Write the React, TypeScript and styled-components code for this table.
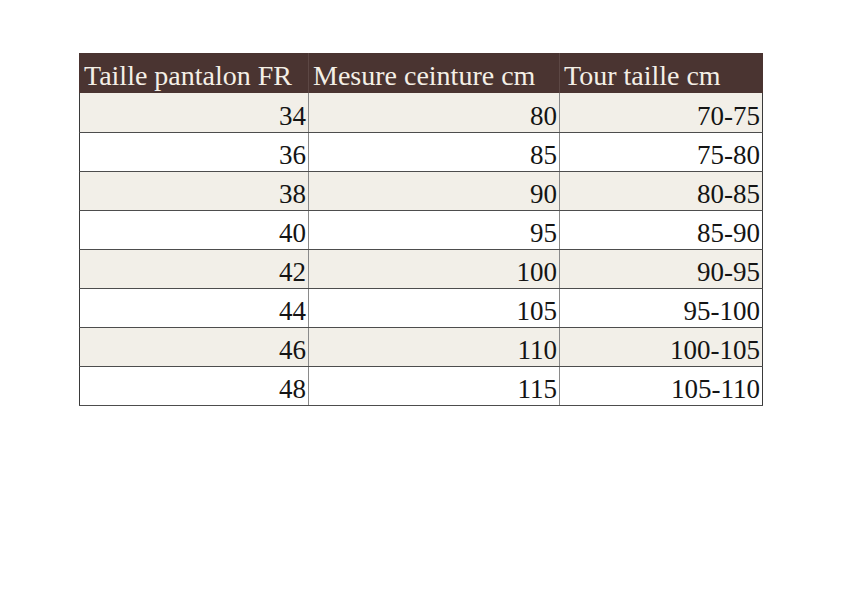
import React from "react";
import styled, { createGlobalStyle } from "styled-components";

const Global = createGlobalStyle`
  html, body { margin: 0; padding: 0; background: #ffffff; }
  body { font-family: "Liberation Serif", "Times New Roman", serif; }
`;

const Page = styled.div`
  width: 842px;
  height: 595px;
  padding: 53px 0 0 79px;
  box-sizing: border-box;
`;

const Table = styled.table`
  border-collapse: collapse;
  table-layout: fixed;
  width: 683px;
  font-family: "Liberation Serif", "Times New Roman", serif;
`;

const HeadCell = styled.th<{ $w: number }>`
  width: ${(p) => p.$w}px;
  height: 40px;
  box-sizing: border-box;
  background: #4a3431;
  color: #f4efe6;
  font-weight: 400;
  font-size: 28px;
  line-height: 32px;
  text-align: left;
  padding: 6px 0 0 4px;
  white-space: nowrap;
  overflow: visible;
  border-left: 1px solid #5c4744;
  &:first-child { border-left: 1px solid #4a3431; }
`;

const Row = styled.tr<{ $alt: boolean }>`
  background: ${(p) => (p.$alt ? "#f2efe8" : "#ffffff")};
`;

const Cell = styled.td`
  height: 39px;
  box-sizing: border-box;
  padding: 0 2px 0 0;
  text-align: right;
  vertical-align: bottom;
  font-size: 27px;
  line-height: 31px;
  color: #141414;
  border-bottom: 1px solid #4d4d4d;
  border-left: 1px solid #8a8a8a;
  &:first-child { border-left: 1px solid #3a3a3a; }
  &:last-child { border-right: 1px solid #3a3a3a; }
`;

const rows: [string, string, string][] = [
  ["34", "80", "70-75"],
  ["36", "85", "75-80"],
  ["38", "90", "80-85"],
  ["40", "95", "85-90"],
  ["42", "100", "90-95"],
  ["44", "105", "95-100"],
  ["46", "110", "100-105"],
  ["48", "115", "105-110"],
];

export default function App() {
  return (
    <>
      <Global />
      <Page>
        <Table>
          <thead>
            <tr>
              <HeadCell $w={229}>Taille pantalon FR</HeadCell>
              <HeadCell $w={251}>Mesure ceinture cm</HeadCell>
              <HeadCell $w={203}>Tour taille cm</HeadCell>
            </tr>
          </thead>
          <tbody>
            {rows.map((r, i) => (
              <Row key={r[0]} $alt={i % 2 === 0}>
                <Cell>{r[0]}</Cell>
                <Cell>{r[1]}</Cell>
                <Cell>{r[2]}</Cell>
              </Row>
            ))}
          </tbody>
        </Table>
      </Page>
    </>
  );
}
